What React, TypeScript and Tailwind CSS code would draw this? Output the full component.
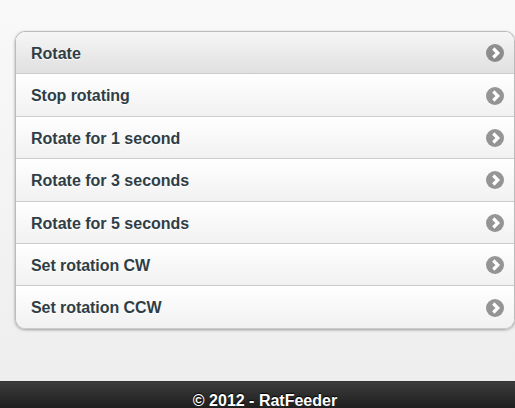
const items = [
  'Rotate',
  'Stop rotating',
  'Rotate for 1 second',
  'Rotate for 3 seconds',
  'Rotate for 5 seconds',
  'Set rotation CW',
  'Set rotation CCW',
];

function Arrow() {
  return (
    <svg className="mt-[1.2px] h-[18px] w-[18px] shrink-0" viewBox="0 0 18 18" fill="none">
      <circle cx="9" cy="9" r="9" fill="#000" fillOpacity="0.4" />
      <path d="M7.3 4.5 11.8 9 7.3 13.5" stroke="#fff" strokeWidth="3.2" />
    </svg>
  );
}

export default function App() {
  return (
    <div className="flex h-[408px] w-[515px] flex-col overflow-hidden bg-linear-to-b from-[#f9f9f9] to-[#eeeeee] to-[380px] font-['Liberation_Sans',Arial,sans-serif] text-[16px] font-bold">
      <main className="h-[381px] shrink-0 pt-[31px] pl-[15px]">
        <ul className="w-[500px] overflow-hidden rounded-[10px] border border-[#bbb] border-b-[#ccc] shadow-[0_1px_3px_rgba(0,0,0,0.35)]">
          {items.map((item, i) => (
            <li
              key={item}
              className={`flex items-center justify-between pr-[10px] pl-[15px] leading-[21px] text-[#2f3e46] [text-shadow:0_1px_0_#fff] ${
                i === 0
                  ? 'h-[41.4px] bg-linear-to-b from-[#f6f6f6] to-[#e0e0e0]'
                  : 'h-[42.4px] border-t border-[#ccc] bg-linear-to-b from-white to-[#f1f1f1]'
              }`}
            >
              <a
                href="#"
                className={`pt-[1.6px] ${/^S/.test(item) ? 'tracking-[-0.06px]' : ''}`}
              >
                {item}
              </a>
              <Arrow />
            </li>
          ))}
        </ul>
      </main>
      <footer className="h-[27px] shrink-0 overflow-hidden border-t border-[#333] bg-linear-to-b from-[#3c3c3c] to-[#1f1f1f] pt-[8px] pl-[15px] text-center leading-[21px] text-white [text-shadow:0_-1px_1px_#000]">
        © 2012 - RatFeeder
      </footer>
    </div>
  );
}
